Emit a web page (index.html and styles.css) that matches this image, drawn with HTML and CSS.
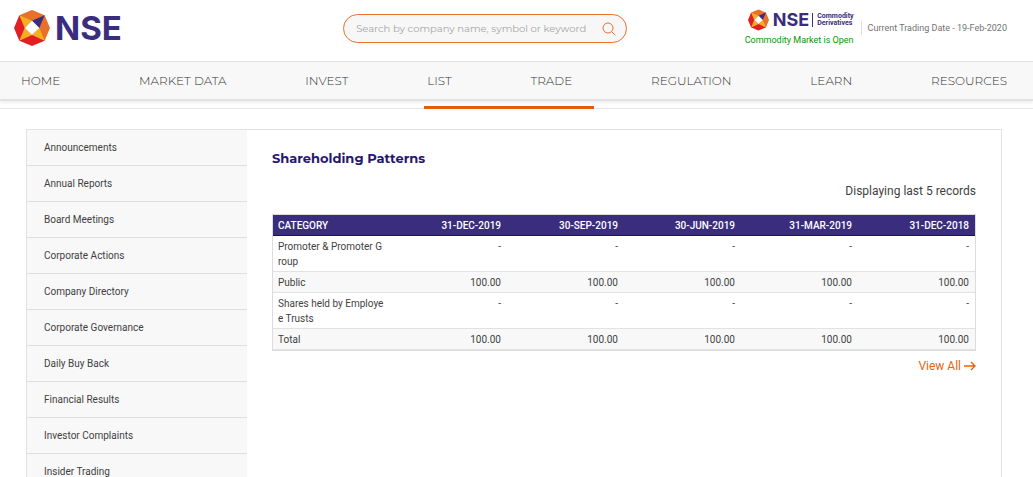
FILE: index.html
```html
<!DOCTYPE html>
<html lang="en">
<head>
<meta charset="utf-8">
<title>NSE - Shareholding Patterns</title>
<link rel="stylesheet" href="styles.css">
</head>
<body>
<svg class="defs" aria-hidden="true">
  <symbol id="mark" viewBox="0 0 108 108">
    <path fill="#e8702a" d="M16 16 54 0 92 16 108 54 92 92H54V54L16 16Z"/>
    <path fill="#e31f26" d="M16 16 0 54l16 38 38 16 38-16-38-38Z"/>
    <path fill="#f2b01e" d="M16 16l38 16-22 22ZM16 92l16-38 22 21ZM92 92l-16-38-22 21Z"/>
    <path fill="#3a2d7d" d="M92 16 54 32l22 22Z"/>
    <path fill="#fff" d="M54 32l22 22-22 21-22-21Z"/>
  </symbol>
</svg>
<header class="header">
  <a class="logo" href="#" aria-label="NSE">
    <svg class="logo-mark"><use href="#mark"/></svg>
    <span class="logo-text">NSE</span>
  </a>
  <form class="search">
    <input class="search-input" type="text" aria-label="Search" placeholder="Search by company name, symbol or keyword">
    <button class="search-button" type="button" aria-label="Submit search">
      <svg class="search-icon" viewBox="0 0 14 14"><circle cx="6" cy="6" r="5"/><path d="M9.500 9.500 13.300 13.300"/></svg>
    </button>
  </form>
  <div class="status">
    <div class="market">
      <a class="commodity" href="#">
        <svg class="commodity-mark"><use href="#mark"/></svg>
        <span class="commodity-text">NSE</span>
        <span class="commodity-label">Commodity<br>Derivatives</span>
      </a>
      <div class="market-open">Commodity Market is Open</div>
    </div>
    <div class="date">Current Trading Date - 19-Feb-2020</div>
  </div>
</header>
<nav class="nav">
  <a href="#">HOME</a>
  <a href="#">MARKET DATA</a>
  <a href="#">INVEST</a>
  <a href="#">LIST</a>
  <a href="#">TRADE</a>
  <a href="#">REGULATION</a>
  <a href="#">LEARN</a>
  <a href="#">RESOURCES</a>
</nav>
<div class="strip"><div class="strip-active"></div></div>
<div class="panel">
  <aside class="sidebar">
    <a href="#">Announcements</a>
    <a href="#">Annual Reports</a>
    <a href="#">Board Meetings</a>
    <a href="#">Corporate Actions</a>
    <a href="#">Company Directory</a>
    <a href="#">Corporate Governance</a>
    <a href="#">Daily Buy Back</a>
    <a href="#">Financial Results</a>
    <a href="#">Investor Complaints</a>
    <a href="#">Insider Trading</a>
  </aside>
  <main class="content">
    <h1 class="title">Shareholding Patterns</h1>
    <p class="note">Displaying last 5 records</p>
    <table class="table">
      <thead>
        <tr><th>CATEGORY</th><th>31-DEC-2019</th><th>30-SEP-2019</th><th>30-JUN-2019</th><th>31-MAR-2019</th><th>31-DEC-2018</th></tr>
      </thead>
      <tbody>
        <tr><td>Promoter &amp; Promoter Group</td><td>-</td><td>-</td><td>-</td><td>-</td><td>-</td></tr>
        <tr><td>Public</td><td>100.00</td><td>100.00</td><td>100.00</td><td>100.00</td><td>100.00</td></tr>
        <tr><td>Shares held by Employee Trusts</td><td>-</td><td>-</td><td>-</td><td>-</td><td>-</td></tr>
        <tr><td>Total</td><td>100.00</td><td>100.00</td><td>100.00</td><td>100.00</td><td>100.00</td></tr>
      </tbody>
    </table>
    <a class="view-all" href="#">View All
      <svg class="arrow" viewBox="0 0 12 10"><path d="M0 5H11M7 1l4 4-4 4"/></svg>
    </a>
  </main>
</div>
</body>
</html>
```
FILE: styles.css
```css
* { box-sizing: border-box; }
body {
  margin: 0;
  height: 100vh;
  overflow: hidden;
  background: #fff;
  color: #3f3f3f;
  font-family: Roboto, sans-serif;
  font-size: 12px;
}
a { color: inherit; text-decoration: none; }
.defs { position: absolute; width: 0; height: 0; }

.header {
  display: grid;
  grid-template-columns: minmax(0, 13fr) 284px minmax(0, 15fr);
  align-items: start;
  height: 61px;
  padding: 9px 26px 0 14px;
}
.logo { display: flex; align-items: center; gap: 5px; height: 38px; }
.logo-mark { width: 36px; height: 36px; }
.logo-text {
  color: #3a2d7d;
  font: 700 33px/38px Inter, sans-serif;
}
.search {
  display: flex;
  align-items: center;
  height: 29px;
  margin-top: 5px;
  padding: 0 10px 0 12px;
  border: 1px solid #e8702a;
  border-radius: 15px;
  background: #f7f7f7;
}
.search-input {
  flex: 1;
  min-width: 0;
  padding: 0;
  border: 0;
  outline: 0;
  background: none;
  font: 400 10px/16px Montserrat, Inter, sans-serif;
}
.search-input::placeholder { color: #a6a6a6; }
.search-button { display: flex; padding: 0; border: 0; background: none; }
.search-icon { width: 14px; height: 14px; fill: none; stroke: #e8702a; }
.status { display: flex; justify-content: flex-end; gap: 7px; }
.market { display: flex; flex-direction: column; align-items: flex-end; white-space: nowrap; }
.commodity { display: flex; align-items: center; height: 22px; color: #3a2d7d; }
.commodity-mark { width: 21px; height: 22px; margin-right: 4px; }
.commodity-text { font: 700 18px/20px Inter, sans-serif; }
.commodity-label {
  margin-left: 3px;
  padding-left: 4px;
  border-left: 1px solid #3a2d7d;
  font: 700 7px/7px Roboto, sans-serif;
}
.market-open { color: #009a00; font-size: 9px; line-height: 18px; }
.date {
  height: 14px;
  margin-top: 12px;
  padding-left: 6px;
  border-left: 1px solid #e0e0e0;
  color: #737373;
  font-size: 9px;
  line-height: 15px;
  white-space: nowrap;
}

.nav {
  display: flex;
  justify-content: space-between;
  padding: 0 26px 0 21px;
  border-top: 1px solid #e2e2e2;
  border-bottom: 2px solid #e2e2e2;
  background: #f8f8f8;
  box-shadow: 0 2px 3px #eee;
  color: #333;
  font: 300 12px/37px Montserrat, "Open Sans", sans-serif;
}
.strip { height: 8px; padding-top: 5px; border-bottom: 1px solid #e6e6e6; }
.strip-active {
  width: 16.5%;
  height: 3px;
  margin-left: 41%;
  background: #e85a0c;
}

.panel {
  display: flex;
  margin: 20px 31px 0 26px;
  border: 1px solid #e2e2e2;
}
.sidebar { flex: 0 0 220px; background: #f8f8f8; }
.sidebar a {
  display: block;
  padding-left: 17px;
  border-bottom: 1px solid #dedede;
  font-size: 10px;
  line-height: 35px;
}
.content {
  display: flex;
  flex: 1;
  flex-direction: column;
  padding: 18px 25px 0;
}
.title {
  margin: 0;
  color: #27166f;
  font: 700 13px/20px Montserrat, Inter, sans-serif;
}
.note { margin: 14px 0; text-align: right; line-height: 18px; }
.table {
  width: 100%;
  table-layout: fixed;
  border: 1px solid #dcdcdc;
  border-collapse: separate;
  border-spacing: 0;
  font-size: 10px;
  line-height: 15px;
}
.table th, .table td {
  padding: 3px 6px 2px 5px;
  border-bottom: 1px solid #e2e2e2;
  text-align: right;
  vertical-align: top;
  word-break: break-all;
}
.table th {
  border-color: #210c69;
  background: #3a2d7d;
  color: #fff;
  font-weight: 500;
}
.table th:first-child, .table td:first-child { text-align: left; }
.table tr:nth-child(even) td { background: #f8f8f8; }
.view-all {
  display: flex;
  align-self: flex-end;
  align-items: center;
  gap: 3px;
  margin-top: 6px;
  color: #e8640c;
  line-height: 18px;
}
.arrow { width: 12px; height: 10px; fill: none; stroke: currentColor; stroke-width: 1.4; }
```
